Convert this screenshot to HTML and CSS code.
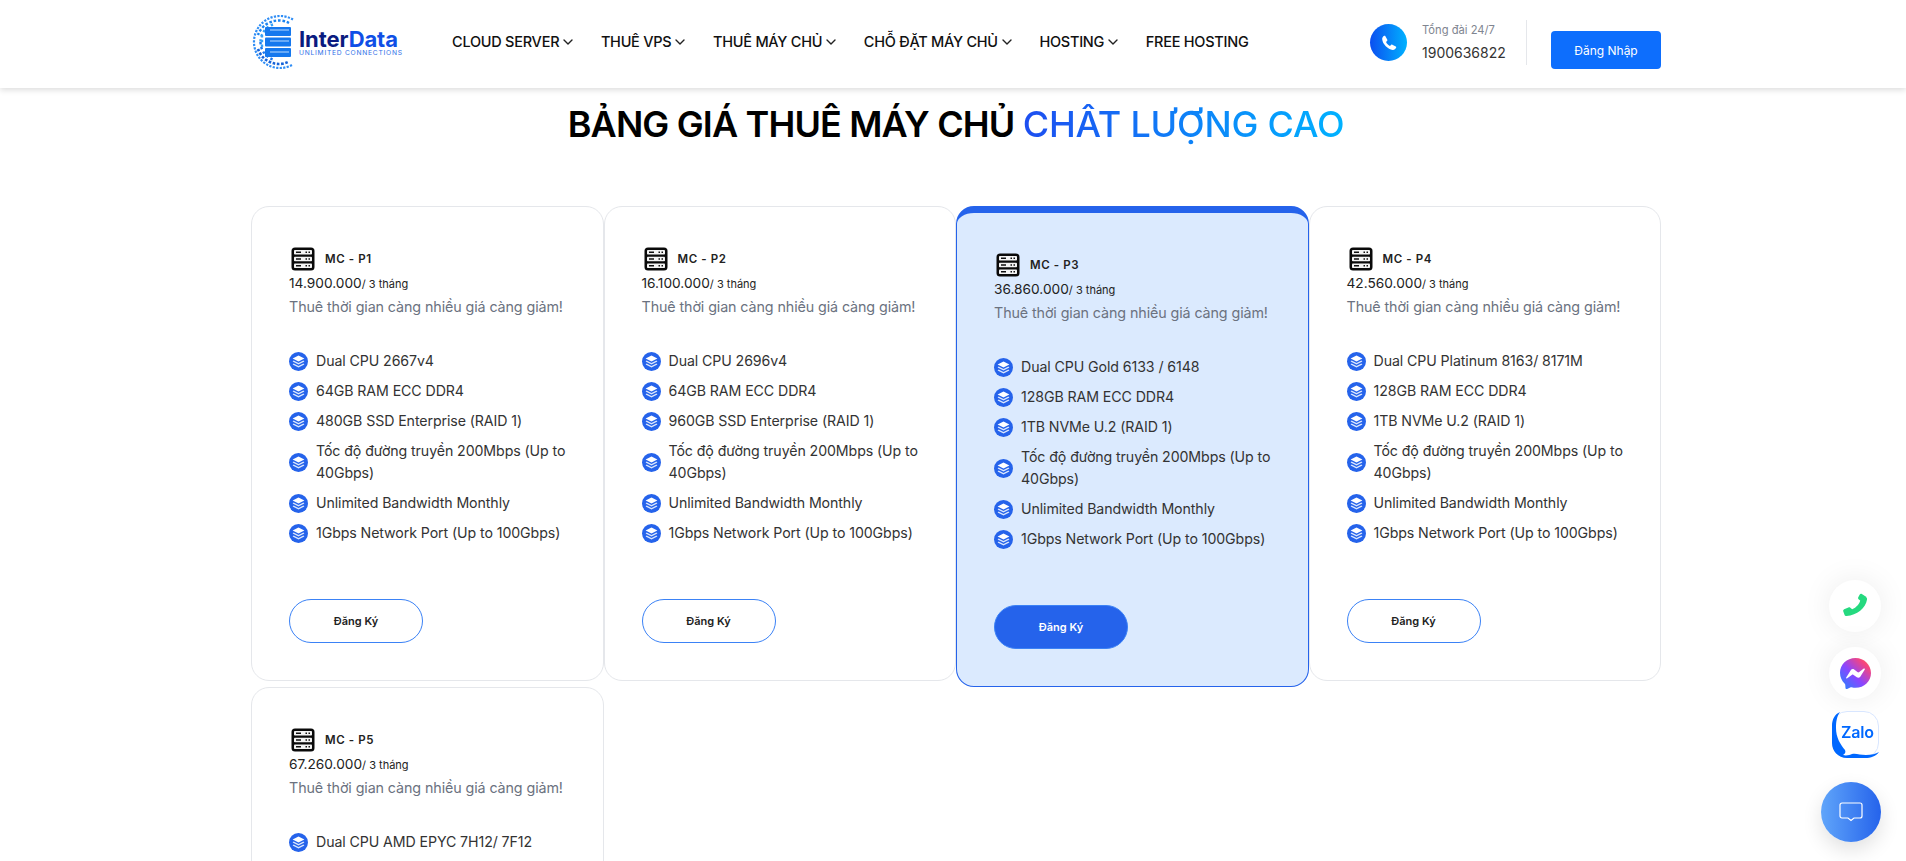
FILE: index.html
```html
<!DOCTYPE html>
<html lang="vi">
<head>
<meta charset="utf-8">
<title>Bảng giá thuê máy chủ</title>
<link rel="stylesheet" href="styles.css">
</head>
<body>
<svg class="defs" width="0" height="0" aria-hidden="true">
  <defs>
    <symbol id="server" viewBox="0 0 24 24">
      <rect x="0.500" y="0.500" width="23" height="23" rx="3.500" fill="#0a0a0a"/>
      <rect x="3" y="3" width="18" height="4.600" rx=".8" fill="#f4f4f4"/>
      <rect x="3" y="9.700" width="18" height="4.600" rx=".8" fill="#f4f4f4"/>
      <rect x="3" y="16.400" width="18" height="4.600" rx=".8" fill="#f4f4f4"/>
      <path d="M5 5.300h5M5 12h5M5 18.700h5" stroke="#111" stroke-width="1.500"/>
      <path d="M14.500 5.300h1.500M17.500 5.300h1.500M14.500 12h1.500M17.500 12h1.500M14.500 18.700h1.500M17.500 18.700h1.500" stroke="#111" stroke-width="1.500"/>
    </symbol>
    <symbol id="layers" viewBox="0 0 19 19">
      <circle cx="9.500" cy="9.500" r="9.500" fill="#2563eb"/>
      <path d="M9.500 3.600 15.400 6.500 9.500 9.400 3.600 6.500Z" fill="#fff"/>
      <path d="M4.600 8.600 9.500 11 14.400 8.600 15.400 9.500 9.500 12.400 3.600 9.500Z" fill="#dbe7fd"/>
      <path d="M4.600 11.600 9.500 14 14.400 11.600 15.400 12.500 9.500 15.400 3.600 12.500Z" fill="#dbe7fd"/>
    </symbol>
    <symbol id="chev" viewBox="0 0 10 6">
      <path d="M1 1 5 5 9 1" fill="none" stroke="#222" stroke-width="1.400" stroke-linecap="round" stroke-linejoin="round"/>
    </symbol>
    <linearGradient id="msgr" x1="0" y1="1" x2="1" y2="0">
      <stop offset="0" stop-color="#1e88ff"/>
      <stop offset=".45" stop-color="#8b45ff"/>
      <stop offset=".8" stop-color="#f5457f"/>
      <stop offset="1" stop-color="#ff7a4d"/>
    </linearGradient>
  </defs>
</svg>

<header class="topbar">
  <a class="logo">
    <svg class="logo-globe" width="46" height="54" viewBox="0 0 46 54" aria-hidden="true">
      <g fill="none">
        <path d="M42 4.500A26 26 0 1 0 42 49.500" stroke="#2f8df5" stroke-width="2.200" stroke-dasharray="2.200 1.300"/>
        <path d="M38 8A22 22 0 0 0 7 20" stroke="#1b84f0" stroke-width="2.400" stroke-dasharray="2.600 1.800"/>
        <path d="M7 34A22 22 0 0 0 38 46.500" stroke="#1462d8" stroke-width="2.600" stroke-dasharray="2.600 1.600"/>
        <path d="M22 9.500A18.500 18.500 0 0 0 9.500 27" stroke="#37a1f7" stroke-width="2.400" stroke-dasharray="2.400 2.600"/>
        <path d="M9.500 27A18.500 18.500 0 0 0 22 44.500" stroke="#1b78ee" stroke-width="2.400" stroke-dasharray="2.400 2.600"/>
        <path d="M11 20V34" stroke="#37a1f7" stroke-width="2.400" stroke-dasharray="2.400 2.400"/>
      </g>
      <rect x="14" y="12" width="26" height="9" rx="1" fill="#1578ee"/>
      <rect x="14" y="22.500" width="26" height="9" rx="1" fill="#1578ee"/>
      <rect x="14" y="33" width="26" height="9" rx="1" fill="#1578ee"/>
      <path d="M19 15h19M19 26h19M19 37h19" stroke="#bcdcff" stroke-width="1"/>
    </svg>
    <span class="logo-words">
      <span class="logo-name"><b class="logo-inter">Inter</b><b class="logo-data">Data</b></span>
      <span class="logo-tag">UNLIMITED CONNECTIONS</span>
    </span>
  </a>
  <nav class="menu">
    <a class="menu-item">CLOUD SERVER <svg class="chev"><use href="#chev"/></svg></a>
    <a class="menu-item">THUÊ VPS <svg class="chev"><use href="#chev"/></svg></a>
    <a class="menu-item">THUÊ MÁY CHỦ <svg class="chev"><use href="#chev"/></svg></a>
    <a class="menu-item">CHỖ ĐẶT MÁY CHỦ <svg class="chev"><use href="#chev"/></svg></a>
    <a class="menu-item">HOSTING <svg class="chev"><use href="#chev"/></svg></a>
    <a class="menu-item">FREE HOSTING</a>
  </nav>
  <div class="contact">
    <span class="phone-dot">
      <svg width="16" height="16" viewBox="0 0 24 24" aria-hidden="true"><path d="M6.600 1.800 9.500 7c.3.600.2 1.200-.2 1.700L7.600 10.500c.9 2.400 3.400 4.900 5.900 5.900l1.800-1.700c.5-.4 1.100-.5 1.700-.2l5.200 2.900c.7.400.9 1.200.5 1.900-1 1.900-2.900 3.300-5.100 3.100C10.400 21.700 2.300 13.600 1.800 6.400 1.600 4.200 3 2.300 4.900 1.300c.6-.4 1.300-.2 1.700.5Z" fill="#fff"/></svg>
    </span>
    <div class="contact-text">
      <span class="contact-label">Tổng đài 24/7</span>
      <span class="contact-num">1900636822</span>
    </div>
  </div>
  <a class="login">Đăng Nhập</a>
</header>

<main class="pricing">
  <h1 class="heading">BẢNG GIÁ THUÊ MÁY CHỦ <span class="heading-accent">CHẤT LƯỢNG CAO</span></h1>
  <section class="plans">

    <article class="plan">
      <div class="plan-head"><svg class="plan-icon"><use href="#server"/></svg><span class="plan-name">MC - P1</span></div>
      <p class="plan-price">14.900.000<small>/ 3 tháng</small></p>
      <p class="plan-note">Thuê thời gian càng nhiều giá càng giảm!</p>
      <ul class="specs">
        <li><svg class="dot"><use href="#layers"/></svg><span>Dual CPU 2667v4</span></li>
        <li><svg class="dot"><use href="#layers"/></svg><span>64GB RAM ECC DDR4</span></li>
        <li><svg class="dot"><use href="#layers"/></svg><span>480GB SSD Enterprise (RAID 1)</span></li>
        <li><svg class="dot"><use href="#layers"/></svg><span>Tốc độ đường truyền 200Mbps (Up to 40Gbps)</span></li>
        <li><svg class="dot"><use href="#layers"/></svg><span>Unlimited Bandwidth Monthly</span></li>
        <li><svg class="dot"><use href="#layers"/></svg><span>1Gbps Network Port (Up to 100Gbps)</span></li>
      </ul>
      <a class="signup">Đăng Ký</a>
    </article>

    <article class="plan">
      <div class="plan-head"><svg class="plan-icon"><use href="#server"/></svg><span class="plan-name">MC - P2</span></div>
      <p class="plan-price">16.100.000<small>/ 3 tháng</small></p>
      <p class="plan-note">Thuê thời gian càng nhiều giá càng giảm!</p>
      <ul class="specs">
        <li><svg class="dot"><use href="#layers"/></svg><span>Dual CPU 2696v4</span></li>
        <li><svg class="dot"><use href="#layers"/></svg><span>64GB RAM ECC DDR4</span></li>
        <li><svg class="dot"><use href="#layers"/></svg><span>960GB SSD Enterprise (RAID 1)</span></li>
        <li><svg class="dot"><use href="#layers"/></svg><span>Tốc độ đường truyền 200Mbps (Up to 40Gbps)</span></li>
        <li><svg class="dot"><use href="#layers"/></svg><span>Unlimited Bandwidth Monthly</span></li>
        <li><svg class="dot"><use href="#layers"/></svg><span>1Gbps Network Port (Up to 100Gbps)</span></li>
      </ul>
      <a class="signup">Đăng Ký</a>
    </article>

    <article class="plan plan-featured">
      <div class="plan-head"><svg class="plan-icon"><use href="#server"/></svg><span class="plan-name">MC - P3</span></div>
      <p class="plan-price">36.860.000<small>/ 3 tháng</small></p>
      <p class="plan-note">Thuê thời gian càng nhiều giá càng giảm!</p>
      <ul class="specs">
        <li><svg class="dot"><use href="#layers"/></svg><span>Dual CPU Gold 6133 / 6148</span></li>
        <li><svg class="dot"><use href="#layers"/></svg><span>128GB RAM ECC DDR4</span></li>
        <li><svg class="dot"><use href="#layers"/></svg><span>1TB NVMe U.2 (RAID 1)</span></li>
        <li><svg class="dot"><use href="#layers"/></svg><span>Tốc độ đường truyền 200Mbps (Up to 40Gbps)</span></li>
        <li><svg class="dot"><use href="#layers"/></svg><span>Unlimited Bandwidth Monthly</span></li>
        <li><svg class="dot"><use href="#layers"/></svg><span>1Gbps Network Port (Up to 100Gbps)</span></li>
      </ul>
      <a class="signup">Đăng Ký</a>
    </article>

    <article class="plan">
      <div class="plan-head"><svg class="plan-icon"><use href="#server"/></svg><span class="plan-name">MC - P4</span></div>
      <p class="plan-price">42.560.000<small>/ 3 tháng</small></p>
      <p class="plan-note">Thuê thời gian càng nhiều giá càng giảm!</p>
      <ul class="specs">
        <li><svg class="dot"><use href="#layers"/></svg><span>Dual CPU Platinum 8163/ 8171M</span></li>
        <li><svg class="dot"><use href="#layers"/></svg><span>128GB RAM ECC DDR4</span></li>
        <li><svg class="dot"><use href="#layers"/></svg><span>1TB NVMe U.2 (RAID 1)</span></li>
        <li><svg class="dot"><use href="#layers"/></svg><span>Tốc độ đường truyền 200Mbps (Up to 40Gbps)</span></li>
        <li><svg class="dot"><use href="#layers"/></svg><span>Unlimited Bandwidth Monthly</span></li>
        <li><svg class="dot"><use href="#layers"/></svg><span>1Gbps Network Port (Up to 100Gbps)</span></li>
      </ul>
      <a class="signup">Đăng Ký</a>
    </article>

    <article class="plan">
      <div class="plan-head"><svg class="plan-icon"><use href="#server"/></svg><span class="plan-name">MC - P5</span></div>
      <p class="plan-price">67.260.000<small>/ 3 tháng</small></p>
      <p class="plan-note">Thuê thời gian càng nhiều giá càng giảm!</p>
      <ul class="specs">
        <li><svg class="dot"><use href="#layers"/></svg><span>Dual CPU AMD EPYC 7H12/ 7F12</span></li>
      </ul>
    </article>

  </section>
</main>

<aside class="floaters">
  <a class="float-btn">
    <svg width="26" height="26" viewBox="0 0 24 24" aria-hidden="true"><path d="M22.600 3.600 18.300.9c-.7-.4-1.500-.2-1.900.4l-1.400 2.700c-.3.600-.2 1.300.3 1.700l1.500 1.300c-.5 2.800-3.600 6.700-7.400 8l-1.700-1.500c-.5-.4-1.200-.5-1.800-.2l-3.900 1.700c-.8.400-1.100 1.200-.8 2l1.200 3.200c.3.700 1 1.100 1.800 1 9.500-.7 17.900-7.500 18.900-15.300.1-1-.2-1.800-1-2.300Z" fill="#25d97f"/></svg>
  </a>
  <a class="float-btn">
    <svg width="31" height="31" viewBox="0 0 30 30" aria-hidden="true"><path d="M15 0C6.500 0 0 6.200 0 14.300c0 4.300 1.800 8 4.600 10.500.5.400.5.800.5 1.400L5.300 29c.1.800.9 1.200 1.600.9l3-1.300c.5-.2.900-.3 1.400-.2 1.200.3 2.400.5 3.700.5 8.500 0 15-6.200 15-14.300S23.500 0 15 0Z" fill="url(#msgr)"/><path d="m6 18.800 4.400-7c.7-1.100 2.200-1.400 3.300-.6l3.500 2.600c.3.200.8.200 1.100 0l4.700-3.600c.6-.5 1.400.3 1 .9l-4.400 7c-.7 1.100-2.200 1.400-3.300.6l-3.500-2.600c-.3-.2-.8-.2-1.100 0l-4.700 3.600c-.6.500-1.400-.3-1-.9Z" fill="#fff"/></svg>
  </a>
  <a class="zalo">
    <svg class="zalo-swoosh" width="47" height="47" viewBox="0 0 47 47" aria-hidden="true"><path d="M8 1C3 3 0 8 0 15v17c0 8 6 15 15 15h18c6 0 11-2 14-6-3 2-8 3-13 3-6 0-10-2-14-1-2 1-6 2-9 1 2-1 3-3 2-5C8 33 4 26 4 17 4 10 5 5 8 1Z" fill="#0068ff"/></svg>
    <span class="zalo-text">Zalo</span>
  </a>
  <a class="chat">
    <svg width="24" height="20" viewBox="0 0 24 20" aria-hidden="true"><path d="M3 1h18a2 2 0 0 1 2 2v11a2 2 0 0 1-2 2h-6l-3 2.500L9 16H3a2 2 0 0 1-2-2V3a2 2 0 0 1 2-2Z" fill="none" stroke="#fff" stroke-width="1.200"/></svg>
  </a>
</aside>
</body>
</html>
```

FILE: styles.css
```css
* { box-sizing: border-box; }
html, body { margin: 0; height: 100%; overflow: hidden; background: #fff; }
body { font-family: "Inter", "Noto Sans", sans-serif; color: #222; }
p, ul, h1 { margin: 0; padding: 0; }
ul { list-style: none; }
.defs { position: absolute; }

.topbar {
  height: 88px;
  display: flex;
  align-items: center;
  padding-left: 251px;
  background: #fff;
  box-shadow: 0 2px 6px rgba(0, 0, 0, .14);
}
.logo { display: flex; align-items: center; width: 150px; flex: none; margin-bottom: 4px; }
.logo-globe { flex: none; margin-right: 2px; }
.logo-words { display: flex; flex-direction: column; margin-top: 3px; }
.logo-name { font-size: 22px; line-height: 20px; letter-spacing: -.1px; white-space: nowrap; }
.logo-inter { color: #0b1b80; font-weight: 700; }
.logo-data { color: #0f4fe6; font-weight: 700; }
.logo-tag { font-size: 6.700px; line-height: 9px; letter-spacing: .75px; color: #2e6fe8; white-space: nowrap; }

.menu { display: flex; gap: 27.600px; margin-left: 51px; margin-bottom: 6px; width: 917px; flex: none; }
.menu-item {
  display: flex;
  align-items: center;
  gap: 4px;
  font-size: 14.500px;
  font-weight: 500;
  letter-spacing: -.25px;
  color: #111;
  white-space: nowrap;
}
.chev { width: 10px; height: 6px; margin-top: 2px; }

.contact { display: flex; align-items: center; gap: 15px; width: 157px; height: 45px; flex: none; border-right: 1px solid #e5e7eb; margin-left: 1px; margin-bottom: 3px; }
.phone-dot {
  width: 37px;
  height: 37px;
  border-radius: 50%;
  display: flex;
  align-items: center;
  justify-content: center;
  background: linear-gradient(90deg, #0b4ff0, #00b2ff);
}
.contact-text { display: flex; flex-direction: column; gap: 7px; }
.contact-label { font-size: 11.200px; line-height: 14px; color: #808590; }
.contact-num { font-size: 14px; line-height: 18px; color: #333; }
.login {
  width: 110px;
  height: 38px;
  margin-left: 24px;
  margin-top: 12px;
  border-radius: 4px;
  background: #0d6efd;
  color: #fff;
  font-size: 12px;
  display: flex;
  align-items: center;
  justify-content: center;
}

.pricing { padding-left: 251px; }
.heading {
  width: 1410px;
  height: 118px;
  padding-top: 10px;
  text-align: center;
  font-size: 36px;
  line-height: 52px;
  font-weight: 600;
  color: #000;
  letter-spacing: -.85px;
}
.heading-accent {
  background: linear-gradient(90deg, #1d4ef0, #00b2ff);
  -webkit-background-clip: text;
  background-clip: text;
  color: transparent;
  font-weight: 500;
  letter-spacing: -.2px;
}

.plans {
  width: 1410px;
  display: grid;
  grid-template-columns: repeat(4, 1fr);
  align-items: start;
}
.plan {
  height: 475px;
  padding: 40px 36px 37px 37px;
  border: 1px solid #e5e7eb;
  border-radius: 18px;
  background: #fff;
  display: flex;
  flex-direction: column;
  margin-bottom: 6px;
}
.plan-featured {
  height: 481px;
  margin-bottom: 0;
  background: #dbeafe;
  border-color: #2563eb;
  border-top-width: 7px;
}
.plan-head { display: flex; align-items: center; gap: 10px; padding-left: 2px; height: 24px; }
.plan-icon { width: 24px; height: 24px; flex: none; }
.plan-name { font-size: 11.500px; font-weight: 600; letter-spacing: .6px; color: #222; }
.plan-price { font-size: 13.700px; line-height: 18px; margin-top: 3px; color: #222; }
.plan-price small { font-size: 11px; }
.plan-note { font-size: 14.300px; line-height: 26px; color: #6b7280; white-space: nowrap; margin-top: 1px; letter-spacing: -.1px; }
.specs { margin-top: 26px; flex: 1; }
.specs li {
  display: flex;
  align-items: center;
  gap: 8px;
  padding: 4px 0;
  font-size: 14.200px;
  line-height: 22px;
  color: #333;
  letter-spacing: -.1px;
}
.dot { width: 19px; height: 19px; flex: none; }

.signup {
  width: 134px;
  height: 44px;
  border: 1px solid #3b82f6;
  border-radius: 22px;
  font-size: 11px;
  font-weight: 600;
  color: #222;
  display: flex;
  align-items: center;
  justify-content: center;
}
.plan-featured .signup { background: #2563eb; color: #fff; }

.floaters { position: fixed; left: 0; top: 0; }
.float-btn {
  position: fixed;
  left: 1829px;
  width: 52px;
  height: 52px;
  border-radius: 50%;
  background: #fff;
  box-shadow: 0 0 30px rgba(0, 0, 0, .08);
  display: flex;
  align-items: center;
  justify-content: center;
}
.float-btn:nth-child(1) { top: 580px; }
.float-btn:nth-child(2) { top: 647px; }
.zalo {
  position: fixed;
  left: 1832px;
  top: 711px;
  width: 47px;
  height: 47px;
  border-radius: 15px;
  background: #fff;
  border: 1px solid #d8e6ff;
  display: flex;
  align-items: center;
  justify-content: center;
}
.zalo-swoosh { position: absolute; left: -1px; top: -1px; }
.zalo-text { position: relative; left: 2px; top: -3px; font-size: 16px; font-weight: 600; color: #0068ff; letter-spacing: -.2px; }
.chat {
  position: fixed;
  left: 1821px;
  top: 782px;
  width: 60px;
  height: 60px;
  border-radius: 50%;
  background: linear-gradient(90deg, #60a5fa, #2563eb);
  box-shadow: 0 8px 20px rgba(0, 0, 0, .12);
  display: flex;
  align-items: center;
  justify-content: center;
}
```
